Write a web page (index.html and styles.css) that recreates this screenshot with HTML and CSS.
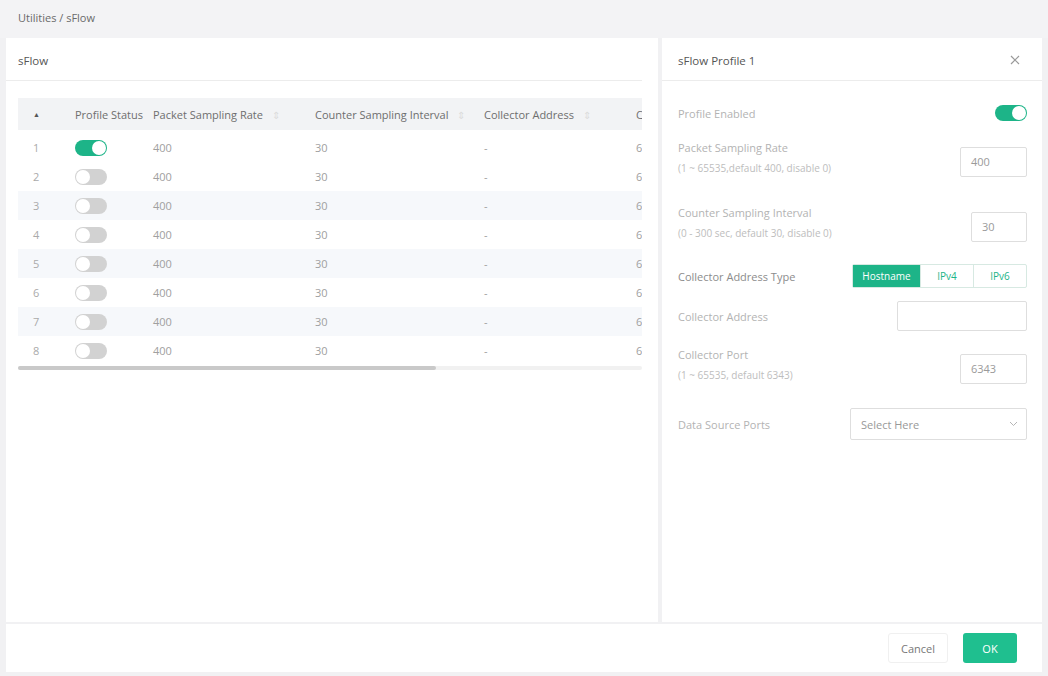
FILE: index.html
```html
<!DOCTYPE html>
<html lang="en">
<head>
    <meta charset="UTF-8">
    <title>Utilities - sFlow</title>
    <link rel="stylesheet" href="styles.css">
</head>
<body>
    <div class="crumb">Utilities / sFlow</div>

    <div class="main">
        <!-- profile list -->
        <div class="list-panel">
            <div class="panel-title">sFlow</div>
            <div class="table-wrap">
                <table class="grid">
                    <colgroup>
                        <col style="width:57px">
                        <col style="width:78px">
                        <col style="width:162px">
                        <col style="width:169px">
                        <col style="width:152px">
                        <col style="width:90px">
                    </colgroup>
                    <thead>
                        <tr>
                            <th class="idx"><span class="up">&#9650;</span></th>
                            <th>Profile Status</th>
                            <th>Packet Sampling Rate <span class="sorter">&#8661;</span></th>
                            <th>Counter Sampling Interval <span class="sorter">&#8661;</span></th>
                            <th>Collector Address <span class="sorter">&#8661;</span></th>
                            <th class="cut">Collector Port</th>
                        </tr>
                    </thead>
                    <tbody>
                        <tr><td class="idx">1</td><td><span class="switch on"></span></td><td>400</td><td>30</td><td>-</td><td class="cut">6343</td></tr>
                        <tr><td class="idx">2</td><td><span class="switch"></span></td><td>400</td><td>30</td><td>-</td><td class="cut">6343</td></tr>
                        <tr class="alt"><td class="idx">3</td><td><span class="switch"></span></td><td>400</td><td>30</td><td>-</td><td class="cut">6343</td></tr>
                        <tr><td class="idx">4</td><td><span class="switch"></span></td><td>400</td><td>30</td><td>-</td><td class="cut">6343</td></tr>
                        <tr class="alt"><td class="idx">5</td><td><span class="switch"></span></td><td>400</td><td>30</td><td>-</td><td class="cut">6343</td></tr>
                        <tr><td class="idx">6</td><td><span class="switch"></span></td><td>400</td><td>30</td><td>-</td><td class="cut">6343</td></tr>
                        <tr class="alt"><td class="idx">7</td><td><span class="switch"></span></td><td>400</td><td>30</td><td>-</td><td class="cut">6343</td></tr>
                        <tr><td class="idx">8</td><td><span class="switch"></span></td><td>400</td><td>30</td><td>-</td><td class="cut">6343</td></tr>
                    </tbody>
                </table>
            </div>
            <div class="hscroll"><div class="thumb"></div></div>
        </div>

        <!-- edit drawer -->
        <div class="drawer">
            <div class="panel-title drawer-title">
                <span>sFlow Profile 1</span>
                <svg class="close" width="10" height="10" viewBox="0 0 10 10">
                    <path d="M1 1L9 9M9 1L1 9" stroke="#9a9a9a" stroke-width="1.2" fill="none"/>
                </svg>
            </div>
            <div class="form">
                <div class="field f-enabled">
                    <div class="label faint">Profile Enabled</div>
                    <span class="switch on"></span>
                </div>
                <div class="field two-line f-rate">
                    <div class="label">
                        <div class="faint">Packet Sampling Rate</div>
                        <div class="hint">(1 ~ 65535,default 400, disable 0)</div>
                    </div>
                    <div class="input w67">400</div>
                </div>
                <div class="field two-line f-interval">
                    <div class="label">
                        <div class="faint">Counter Sampling Interval</div>
                        <div class="hint">(0 - 300 sec, default 30, disable 0)</div>
                    </div>
                    <div class="input w56">30</div>
                </div>
                <div class="field f-type">
                    <div class="label">Collector Address Type</div>
                    <div class="segment">
                        <span class="seg active">Hostname</span>
                        <span class="seg">IPv4</span>
                        <span class="seg">IPv6</span>
                    </div>
                </div>
                <div class="field f-addr">
                    <div class="label faint">Collector Address</div>
                    <div class="input w130"></div>
                </div>
                <div class="field two-line f-port">
                    <div class="label">
                        <div class="faint">Collector Port</div>
                        <div class="hint">(1 ~ 65535, default 6343)</div>
                    </div>
                    <div class="input w67">6343</div>
                </div>
                <div class="field f-ports">
                    <div class="label faint">Data Source Ports</div>
                    <div class="select">
                        <span>Select Here</span>
                        <svg width="9" height="6" viewBox="0 0 9 6">
                            <path d="M1 1L4.5 4.5L8 1" stroke="#b5b5b5" stroke-width="1" fill="none"/>
                        </svg>
                    </div>
                </div>
            </div>
        </div>
    </div>

    <div class="footer">
        <button class="btn cancel">Cancel</button>
        <button class="btn ok">OK</button>
    </div>
</body>
</html>
```

FILE: styles.css
```css
body {
    margin: 0;
    background-color: #f1f1f3;
    font-family: "Open Sans", "Noto Sans", sans-serif;
    font-size: 11px;
    color: #777;
}
.crumb {
    height: 38px;
    line-height: 36px;
    padding-left: 18px;
    color: #6a6a6a;
    background-color: #f3f3f5;
}
.main {
    display: flex;
    gap: 4px;
    height: 584px;
    margin: 0 6px 0 6px;
}
.list-panel {
    width: 652px;
    background-color: #fff;
    box-sizing: border-box;
    padding: 0 16px 0 0;
}
.panel-title {
    height: 43px;
    line-height: 45px;
    padding-left: 12px;
    font-size: 11.5px;
    color: #555;
    border-bottom: 1px solid #ececec;
    box-sizing: border-box;
}
.table-wrap {
    margin: 17px 0 0 12px;
    width: 624px;
    overflow: hidden;
}
.grid {
    table-layout: fixed;
    border-collapse: collapse;
    width: 708px;
}
.grid th {
    height: 32px;
    text-align: left;
    font-weight: normal;
    color: #6e6e6e;
    background-color: #f2f3f5;
    white-space: nowrap;
    padding: 0;
}
.grid td {
    height: 29px;
    padding: 0;
    color: #a0a0a0;
    white-space: nowrap;
}
.grid tr:first-child td {
    padding-top: 3px;
}
.grid .cut {
    overflow: hidden;
}
.grid tr.alt td {
    background-color: #f6f8fb;
}
.grid .idx {
    padding-left: 15px;
    color: #aaa;
}
.up {
    font-size: 7px;
    color: #555;
    position: relative;
    top: -2px;
}
.sorter {
    color: #dcdcdc;
    font-size: 10px;
    margin-left: 6px;
}
.switch {
    display: inline-block;
    position: relative;
    width: 32px;
    height: 16px;
    border-radius: 8px;
    background-color: #d2d2d2;
    vertical-align: middle;
}
.switch::after {
    content: "";
    position: absolute;
    top: 1px;
    left: 1px;
    width: 14px;
    height: 14px;
    border-radius: 50%;
    background-color: #fff;
}
.switch.on {
    background-color: #1db488;
}
.switch.on::after {
    left: 17px;
}
.hscroll {
    margin: 1px 0 0 12px;
    width: 624px;
    height: 4px;
    background-color: #f1f1f1;
    border-radius: 2px;
}
.hscroll .thumb {
    width: 418px;
    height: 4px;
    border-radius: 2px;
    background-color: #c9c9c9;
}
.drawer {
    width: 380px;
    background-color: #fff;
}
.drawer-title {
    display: flex;
    justify-content: space-between;
    align-items: center;
    padding: 2px 20px 0 16px;
    line-height: normal;
}
.close {
    margin-right: 2px;
}
.form {
    padding: 0 15px 0 16px;
}
.field {
    display: flex;
    justify-content: space-between;
    align-items: center;
}
.label {
    color: #8c8c8c;
    line-height: 21px;
}
.faint {
    color: #b3b3b3;
}
.hint {
    color: #bdbdbd;
    font-size: 10px;
}
.two-line {
    align-items: flex-start;
    height: 42px;
}
.two-line .input {
    margin-top: 10px;
}
.f-enabled { margin-top: 23px; height: 18px; }
.f-rate { margin-top: 15px; }
.f-interval { margin-top: 23px; }
.f-type { margin-top: 20px; height: 24px; }
.f-addr { margin-top: 13px; height: 30px; }
.f-port { margin-top: 13px; }
.f-ports { margin-top: 22px; height: 32px; }
.input {
    height: 30px;
    box-sizing: border-box;
    border: 1px solid #dedede;
    border-radius: 2px;
    padding-left: 10px;
    line-height: 28px;
    color: #9a9a9a;
}
.w67 { width: 67px; }
.w56 { width: 56px; }
.w130 { width: 130px; }
.segment {
    display: flex;
    height: 24px;
    border: 1px solid #d7e9e2;
    border-radius: 2px;
    box-sizing: border-box;
}
.seg {
    width: 52px;
    text-align: center;
    line-height: 22px;
    font-size: 10px;
    color: #1db488;
    border-left: 1px solid #d7e9e2;
}
.seg.active {
    width: 67px;
    border-left: none;
    background-color: #1db488;
    color: #fff;
}
.select {
    width: 177px;
    height: 32px;
    box-sizing: border-box;
    border: 1px solid #dedede;
    border-radius: 2px;
    display: flex;
    justify-content: space-between;
    align-items: center;
    padding: 0 8px 0 10px;
    color: #999;
}
.footer {
    display: flex;
    justify-content: flex-end;
    align-items: center;
    gap: 15px;
    height: 48px;
    margin: 2px 6px 0 6px;
    padding-right: 25px;
    background-color: #fff;
}
.btn {
    height: 30px;
    border-radius: 3px;
    font-family: "Open Sans", "Noto Sans", sans-serif;
    font-size: 11px;
    cursor: pointer;
}
.cancel {
    width: 60px;
    border: 1px solid #f0f0f0;
    background-color: #fff;
    color: #777;
}
.ok {
    width: 54px;
    border: none;
    background-color: #1fbf8f;
    color: #fff;
}
```
